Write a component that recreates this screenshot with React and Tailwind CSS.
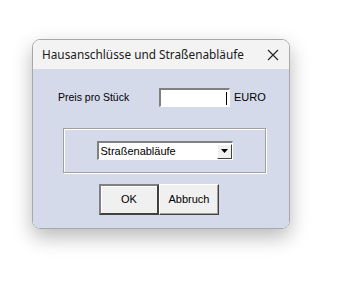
// Windows-Dialog: Hausanschlüsse und Straßenabläufe
export default function App() {
  return (
    <div className="h-[287px] w-[338px] bg-white pl-[32px] pt-[39px]" style={{ fontFamily: '"Liberation Sans", Arial, sans-serif' }}>
      <div className="flex h-[190px] w-[258px] flex-col overflow-hidden rounded-[8px] border border-[#a8a8a8] shadow-[0_8px_20px_rgba(0,0,0,0.28)]">
        <div className="flex h-[29px] shrink-0 items-center justify-between bg-[#f3f3f3] pl-[9px] pr-[10px]">
          <span className="text-[11.8px] text-[#1a1a1a]" style={{ fontFamily: '"Noto Sans", sans-serif' }}>
            Hausanschlüsse und Straßenabläufe
          </span>
          <svg width="12" height="12" viewBox="0 0 12 12" fill="none" stroke="#222" strokeWidth="1.1">
            <path d="M1 1l10 10M11 1L1 11" />
          </svg>
        </div>

        <div className="flex flex-1 flex-col bg-[#d5daea] text-[10.5px] text-black">
          <div className="mt-[19px] flex items-center">
            <span className="ml-[25px] w-[101px]">Preis pro Stück</span>
            <div className="relative h-[19px] w-[71px] border-b border-l-2 border-r border-t-2 border-b-white border-l-[#808080] border-r-white border-t-[#808080] bg-white">
              <span className="absolute right-[2px] top-[2px] h-[13px] w-px bg-black" />
            </div>
            <span className="ml-[4px] text-[11px]">EURO</span>
          </div>

          <div className="ml-[30px] mt-[21px] flex h-[45px] w-[203px] items-center justify-center border border-[#a0a0a0] shadow-[inset_1px_1px_0_white,1px_1px_0_white]">
            <div className="flex h-[19px] w-[136px] items-center border-b border-l-2 border-r border-t-2 border-b-white border-l-[#808080] border-r-white border-t-[#808080] bg-white pl-[2px] text-[11px]">
              <span className="flex-1">Straßenabläufe</span>
              <div className="flex h-[15px] w-[15px] items-center justify-center border border-b-[#404040] border-l-white border-r-[#404040] border-t-white bg-[#f0f0f0]">
                <svg width="7" height="4" viewBox="0 0 7 4">
                  <path d="M0 0h7L3.5 4z" fill="black" />
                </svg>
              </div>
            </div>
          </div>

          <div className="ml-[66px] mt-[11px] flex">
            <button className="h-[31px] w-[60px] border-2 border-b-[#404040] border-l-[#808080] border-r-[#404040] border-t-[#808080] bg-[#f0f0f0] text-[11px] shadow-[inset_1px_1px_0_white]">
              OK
            </button>
            <button className="h-[31px] w-[60px] border border-b-[#404040] border-l-white border-r-[#404040] border-t-white bg-[#f0f0f0] text-[11px] shadow-[inset_-1px_-1px_0_#a0a0a0]">
              Abbruch
            </button>
          </div>
        </div>
      </div>
    </div>
  );
}
